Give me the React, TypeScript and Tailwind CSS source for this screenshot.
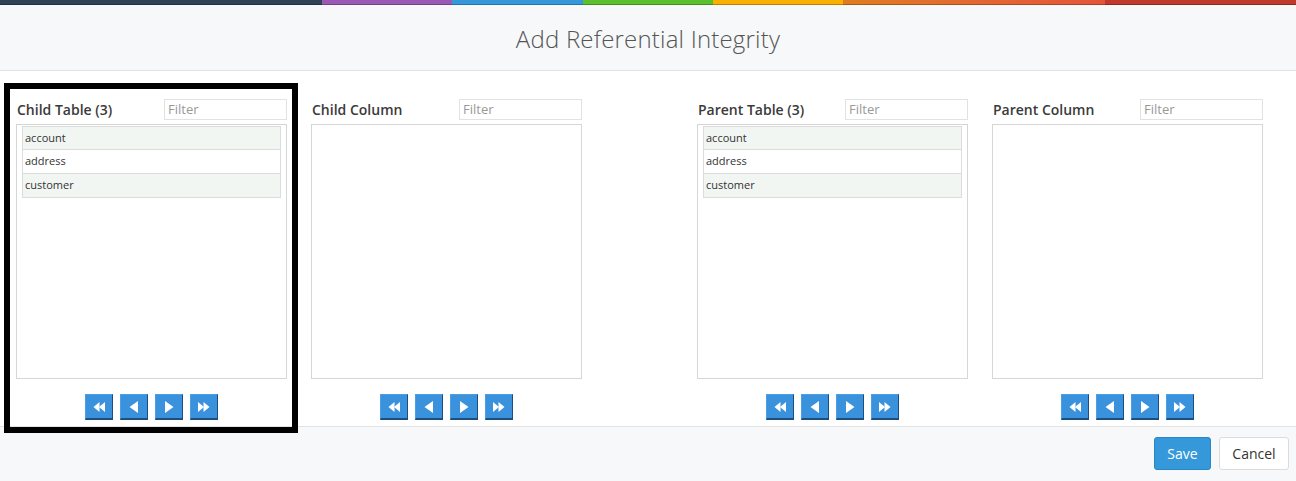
import React from "react";

const font = { fontFamily: '"Open Sans", "Noto Sans", sans-serif' };

type Panel = {
  title: string;
  items: string[];
};

function NavIcon({ kind }: { kind: "first" | "prev" | "next" | "last" }) {
  if (kind === "prev") {
    return (
      <svg width="14" height="14" viewBox="0 0 14 14">
        <path d="M11 1 L11 13 L2.5 7 Z" fill="#fff" />
      </svg>
    );
  }
  if (kind === "next") {
    return (
      <svg width="14" height="14" viewBox="0 0 14 14">
        <path d="M3 1 L3 13 L11.5 7 Z" fill="#fff" />
      </svg>
    );
  }
  if (kind === "first") {
    return (
      <svg width="14" height="14" viewBox="0 0 14 14">
        <path d="M7.5 2 L7.5 12 L1.5 7 Z" fill="#fff" />
        <path d="M13 2 L13 12 L7 7 Z" fill="#fff" />
      </svg>
    );
  }
  return (
    <svg width="14" height="14" viewBox="0 0 14 14">
      <path d="M1 2 L1 12 L7 7 Z" fill="#fff" />
      <path d="M6.5 2 L6.5 12 L12.5 7 Z" fill="#fff" />
    </svg>
  );
}

function NavButton({ kind }: { kind: "first" | "prev" | "next" | "last" }) {
  return (
    <button className="w-[28px] h-[26px] flex items-center justify-center bg-[#3a92dc] border border-t-[#4aa0e6] border-l-[#4aa0e6] border-r-[#1d4f7e] border-b-[#1d4f7e] border-b-2">
      <NavIcon kind={kind} />
    </button>
  );
}

function ListPanel({ title, items }: Panel) {
  return (
    <div className="w-[271px] shrink-0 flex flex-col">
      <div className="flex items-center justify-between h-[22px] mt-[27px]">
        <span className="text-[14px] font-semibold text-[#3a3a3a] pl-[1px]">{title}</span>
        <input
          placeholder="Filter"
          className="w-[123px] h-[21px] border border-[#e2e2e2] px-[3px] text-[13px] text-[#333] placeholder:text-[#999] outline-none"
          style={font}
        />
      </div>
      <div className="mt-[4px] h-[255px] border border-[#d6d6d6] px-[5px] pt-[1px]">
        {items.map((it, i) => (
          <div
            key={it}
            className={`h-[24px] flex items-center px-[2px] text-[11px] text-[#333] border border-[#dcdcdc] ${i > 0 ? "border-t-0" : ""} ${i % 2 === 0 ? "bg-[#f2f6f2]" : "bg-white"}`}
          >
            {it}
          </div>
        ))}
      </div>
      <div className="flex justify-center gap-[7px] mt-[15px]">
        <NavButton kind="first" />
        <NavButton kind="prev" />
        <NavButton kind="next" />
        <NavButton kind="last" />
      </div>
    </div>
  );
}

const stripes = [
  { w: "w-[322px]", c: "bg-[#2f4356]" },
  { w: "w-[130px]", c: "bg-[#9b59b6]" },
  { w: "w-[131px]", c: "bg-[#3498db]" },
  { w: "w-[130px]", c: "bg-[#5bbf2e]" },
  { w: "w-[130px]", c: "bg-[#f9b000]" },
  { w: "w-[262px]", c: "bg-gradient-to-r from-[#e07b1f] to-[#e5533a]" },
  { w: "flex-1", c: "bg-[#c0392b]" },
];

export default function App() {
  const tables = ["account", "address", "customer"];
  return (
    <div className="w-[1296px] h-[481px] bg-white flex flex-col overflow-hidden" style={font}>
      <div className="flex h-[5px] shrink-0">
        {stripes.map((s, i) => (
          <div key={i} className={`${s.w} ${s.c} h-full border-b border-black/25`} />
        ))}
      </div>
      <div className="h-[66px] shrink-0 bg-[#f7f8fa] border-b border-[#e3e3e3] flex items-center justify-center">
        <h1 className="text-[24px] font-light text-[#555] tracking-[0.2px] mt-[2px]">Add Referential Integrity</h1>
      </div>
      <div className="relative flex-1 flex bg-white">
        {/* highlight frame around the first panel */}
        <div className="absolute left-[4px] top-[12px] w-[294px] h-[350px] border-[6px] border-black pointer-events-none z-10" />
        <div className="flex pl-[16px] gap-[24px]">
          <ListPanel title="Child Table (3)" items={tables} />
          <ListPanel title="Child Column" items={[]} />
        </div>
        <div className="flex ml-[115px] gap-[24px]">
          <ListPanel title="Parent Table (3)" items={tables} />
          <ListPanel title="Parent Column" items={[]} />
        </div>
      </div>
      <div className="h-[55px] shrink-0 bg-[#f7f8fa] border-t border-[#e3e3e3] flex items-start justify-end gap-[8px] pr-[7px] pt-[10px]">
        <button className="w-[57px] h-[33px] rounded-[3px] bg-[#3498db] border border-[#2a85c5] text-white text-[14px]">Save</button>
        <button className="w-[70px] h-[33px] rounded-[3px] bg-white border border-[#dcdcdc] text-[#333] text-[14px]">Cancel</button>
      </div>
    </div>
  );
}
